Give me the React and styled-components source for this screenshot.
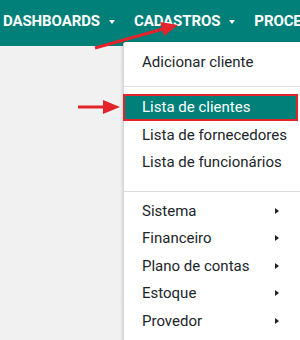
import React from "react";
import styled, { createGlobalStyle } from "styled-components";

const Global = createGlobalStyle`
  html, body { margin: 0; padding: 0; background: #f1f1f1; }
  body { font-family: Roboto, "Liberation Sans", sans-serif; }
`;

const TEAL = "#017f79";
const RED = "#e3242b";

const Page = styled.div`
  position: relative;
  width: 300px;
  height: 340px;
  overflow: hidden;
  background: #f1f1f1;
`;

const NavBar = styled.nav`
  display: flex;
  align-items: center;
  gap: 19px;
  height: 46px;
  padding: 0 0 0 3px;
  background: ${TEAL};
  white-space: nowrap;
`;

const NavItem = styled.div`
  display: flex;
  align-items: center;
  gap: 9px;
  color: #fff;
  font-weight: 700;
  font-size: 15px;
  letter-spacing: -0.1px;
  flex-shrink: 0;
  padding-bottom: 4px;
`;

const DownCaret = styled.span`
  width: 0;
  height: 0;
  border-left: 3.5px solid transparent;
  border-right: 3.5px solid transparent;
  border-top: 4px solid #fff;
  margin-top: 1px;
`;

const Menu = styled.div`
  position: absolute;
  left: 123px;
  top: 42px;
  width: 190px;
  height: 320px;
  background: #fff;
  border-left: 1px solid #d6d6d6;
  box-shadow: -1px 0 3px rgba(0, 0, 0, 0.12);
  border-top-left-radius: 3px;
  padding-top: 6.5px;
  box-sizing: border-box;
`;

const Item = styled.div`
  display: flex;
  align-items: center;
  justify-content: space-between;
  box-sizing: border-box;
  width: ${(p) => (p.$active ? "175px" : "100%")};
  height: 27.5px;
  padding: 0 ${(p) => (p.$active ? "0" : "34px")} 0 ${(p) => (p.$active ? "17px" : "18px")};
  margin-left: ${(p) => (p.$active ? "-1px" : "0")};
  font-size: 15px;
  color: ${(p) => (p.$active ? "#fff" : "#212529")};
  background: ${(p) => (p.$active ? TEAL : "transparent")};
  border: ${(p) => (p.$active ? `2px solid ${RED}` : "none")};
  white-space: nowrap;
`;

const RightCaret = styled.span`
  width: 0;
  height: 0;
  border-top: 3.5px solid transparent;
  border-bottom: 3.5px solid transparent;
  border-left: 4px solid #222;
`;

const Divider = styled.hr`
  border: 0;
  border-top: 1px solid #dcdcdc;
  margin: ${(p) => p.$top}px 0 ${(p) => p.$bottom}px 0;
`;

const Arrows = styled.svg`
  position: absolute;
  left: 0;
  top: 0;
  pointer-events: none;
`;

const groupA = ["Lista de fornecedores", "Lista de funcionários"];
const groupB = ["Sistema", "Financeiro", "Plano de contas", "Estoque", "Provedor"];

export default function App() {
  return (
    <>
      <Global />
      <Page>
        <NavBar>
          <NavItem>
            DASHBOARDS <DownCaret />
          </NavItem>
          <NavItem>
            CADASTROS <DownCaret />
          </NavItem>
          <NavItem>PROCESSOS</NavItem>
        </NavBar>
        <Menu>
          <Item>Adicionar cliente</Item>
          <Divider $top={10} $bottom={6.5} />
          <Item $active>Lista de clientes</Item>
          {groupA.map((t) => (
            <Item key={t}>{t}</Item>
          ))}
          <Divider $top={15} $bottom={5} />
          {groupB.map((t) => (
            <Item key={t}>
              {t}
              <RightCaret />
            </Item>
          ))}
        </Menu>
        <Arrows width="300" height="340" viewBox="0 0 300 340">
          <line x1="95" y1="48" x2="163" y2="29" stroke={RED} strokeWidth="3" />
          <polygon points="178,25 160,22 164,36" fill={RED} />
          <line x1="78" y1="107" x2="105" y2="107" stroke={RED} strokeWidth="3" />
          <polygon points="120,107 103,100 103,114" fill={RED} />
        </Arrows>
      </Page>
    </>
  );
}
